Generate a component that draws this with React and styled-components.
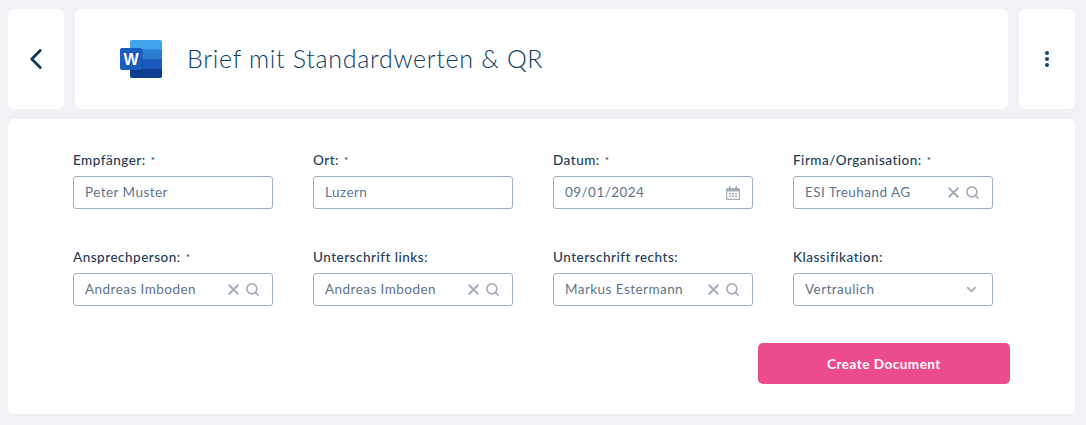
import React from "react";
import styled, { createGlobalStyle } from "styled-components";
import { ChevronLeft, ChevronDown, X, Search } from "lucide-react";

const Global = createGlobalStyle`
   html, body {
      margin: 0;
      padding: 0;
      background: #f1f2f5;
      height: 100%;
   }
   * {
      box-sizing: border-box;
   }
`
const Page = styled.div`
   width: 1086px;
   height: 425px;
   padding: 9px 11px 11px 8px;
   display: flex;
   flex-direction: column;
   gap: 10px;
   font-family: Lato, "Liberation Sans", sans-serif;
   overflow: hidden;
`
const Header = styled.header`
   display: flex;
   gap: 11px;
   height: 100px;
`
const Card = styled.div`
   background: #fff;
   border-radius: 6px;
`
const SideCard = styled(Card)`
   width: 56px;
   flex-shrink: 0;
   display: flex;
   align-items: center;
   justify-content: center;
   color: #0c3c63;
`
const TitleCard = styled(Card)`
   flex: 1;
   display: flex;
   align-items: center;
   padding-left: 45px;
   gap: 25px;
`
const Title = styled.h1`
   margin: 0 0 2px;
   font-size: 25px;
   font-weight: 300;
   color: #0c3c63;
   letter-spacing: 0.7px;
`
const Dots = styled.div`
   display: flex;
   flex-direction: column;
   gap: 2px;
   & > span {
      width: 4px;
      height: 4px;
      border-radius: 50%;
      background: #0c4570;
   }
`
const FormCard = styled(Card)`
   flex: 1;
   padding: 33px 65px 0;
   display: flex;
   flex-direction: column;
`
const Fields = styled.div`
   display: grid;
   grid-template-columns: repeat(4, 200px);
   column-gap: 40px;
   row-gap: 40px;
`
const Field = styled.div`
   display: flex;
   flex-direction: column;
   gap: 8px;
`
const Label = styled.label`
   height: 16px;
   line-height: 16px;
   font-size: 13.5px;
   font-weight: 500;
   color: #1d3b55;
   letter-spacing: 0.5px;
`
const Required = styled.span`
   font-size: 10px;
   margin-left: 1px;
   position: relative;
   top: -1px;
`
const InputBox = styled.div`
   height: 33px;
   border: 1px solid #9fb0c3;
   border-radius: 3px;
   display: flex;
   align-items: center;
   padding: 0 12px 2px 11px;
   color: #60748a;
   font-size: 13.5px;
   letter-spacing: 0.45px;
   background: #fff;
`
const Value = styled.span`
   flex: 1;
   white-space: nowrap;
`
const Icons = styled.div`
   display: flex;
   align-items: center;
   gap: 3px;
   color: #a3aeba;
   margin-top: 2px;
`
const Chevron = styled(Icons)`
   margin-right: 1px;
`
const Actions = styled.div`
   display: flex;
   justify-content: flex-end;
   margin-top: 37px;
`
const Button = styled.button`
   width: 252px;
   height: 41px;
   border: 0;
   border-radius: 5px;
   background: #ec4c8b;
   color: #fff;
   font-family: inherit;
   font-size: 13.5px;
   font-weight: 700;
   letter-spacing: 0.5px;
`

const WordIcon = () => (
   <svg width="42" height="38" viewBox="0 0 42 38" aria-hidden="true">
      <rect x="10" y="0" width="32" height="38" rx="2" fill="#41a5ee" />
      <rect x="10" y="9.500" width="32" height="9.500" fill="#2b7cd3" />
      <rect x="10" y="19" width="32" height="9.500" fill="#185abd" />
      <path d="M10 28.500h32V36a2 2 0 0 1-2 2H12a2 2 0 0 1-2-2z" fill="#103f91" />
      <rect x="10" y="9" width="13" height="24" fill="#0d3a80" opacity="0.35" />
      <rect x="0" y="8" width="22" height="22" rx="2" fill="#1a5dbf" />
      <text x="11" y="25" textAnchor="middle" fontFamily="'Liberation Sans', sans-serif" fontWeight="700" fontSize="16" fill="#fff">W</text>
   </svg>
)

const CalendarIcon = () => (
   <svg width="14" height="14" viewBox="0 0 14 14" fill="#a3aeba" aria-hidden="true">
      <path d="M3 0h1.500v2h5V0H11v2h1.500A1.500 1.500 0 0 1 14 3.500v9a1.500 1.500 0 0 1-1.500 1.500h-11A1.500 1.500 0 0 1 0 12.500v-9A1.500 1.500 0 0 1 1.500 2H3zM1.200 5.500v7c0 .2.100.300.300.300h11c.2 0 .3-.1.3-.3v-7z" />
      <path d="M3 7h2v1.500H3zM6 7h2v1.500H6zM9 7h2v1.500H9zM3 9.500h2V11H3zM6 9.500h2V11H6zM9 9.500h2V11H9z" />
   </svg>
)

const LookupIcons = () => (
   <Icons>
      <X size={17} strokeWidth={2.8} />
      <Search size={15} strokeWidth={2.6} />
   </Icons>
)

const fields = [
   { label: "Empfänger:", required: true, value: "Peter Muster" },
   { label: "Ort:", required: true, value: "Luzern" },
   { label: "Datum:", required: true, value: "09/01/2024", icon: <Icons><CalendarIcon /></Icons> },
   { label: "Firma/Organisation:", required: true, value: "ESI Treuhand AG", icon: <LookupIcons /> },
   { label: "Ansprechperson:", required: true, value: "Andreas Imboden", icon: <LookupIcons /> },
   { label: "Unterschrift links:", value: "Andreas Imboden", icon: <LookupIcons /> },
   { label: "Unterschrift rechts:", value: "Markus Estermann", icon: <LookupIcons /> },
   { label: "Klassifikation:", value: "Vertraulich", icon: <Chevron><ChevronDown size={15} strokeWidth={3} /></Chevron> },
]

const App = () => {
   return (
      <>
         <Global />
         <Page>
            <Header>
               <SideCard>
                  <ChevronLeft size={34} strokeWidth={2} />
               </SideCard>
               <TitleCard>
                  <WordIcon />
                  <Title>Brief mit Standardwerten &amp; QR</Title>
               </TitleCard>
               <SideCard>
                  <Dots>
                     <span />
                     <span />
                     <span />
                  </Dots>
               </SideCard>
            </Header>
            <FormCard>
               <Fields>
                  {fields.map((item, index) => {
                     return (
                        <Field key={index}>
                           <Label>
                              {item.label} {item.required && <Required>*</Required>}
                           </Label>
                           <InputBox>
                              <Value>{item.value}</Value>
                              {item.icon}
                           </InputBox>
                        </Field>
                     )
                  })}
               </Fields>
               <Actions>
                  <Button>Create Document</Button>
               </Actions>
            </FormCard>
         </Page>
      </>
   )
}

export default App
